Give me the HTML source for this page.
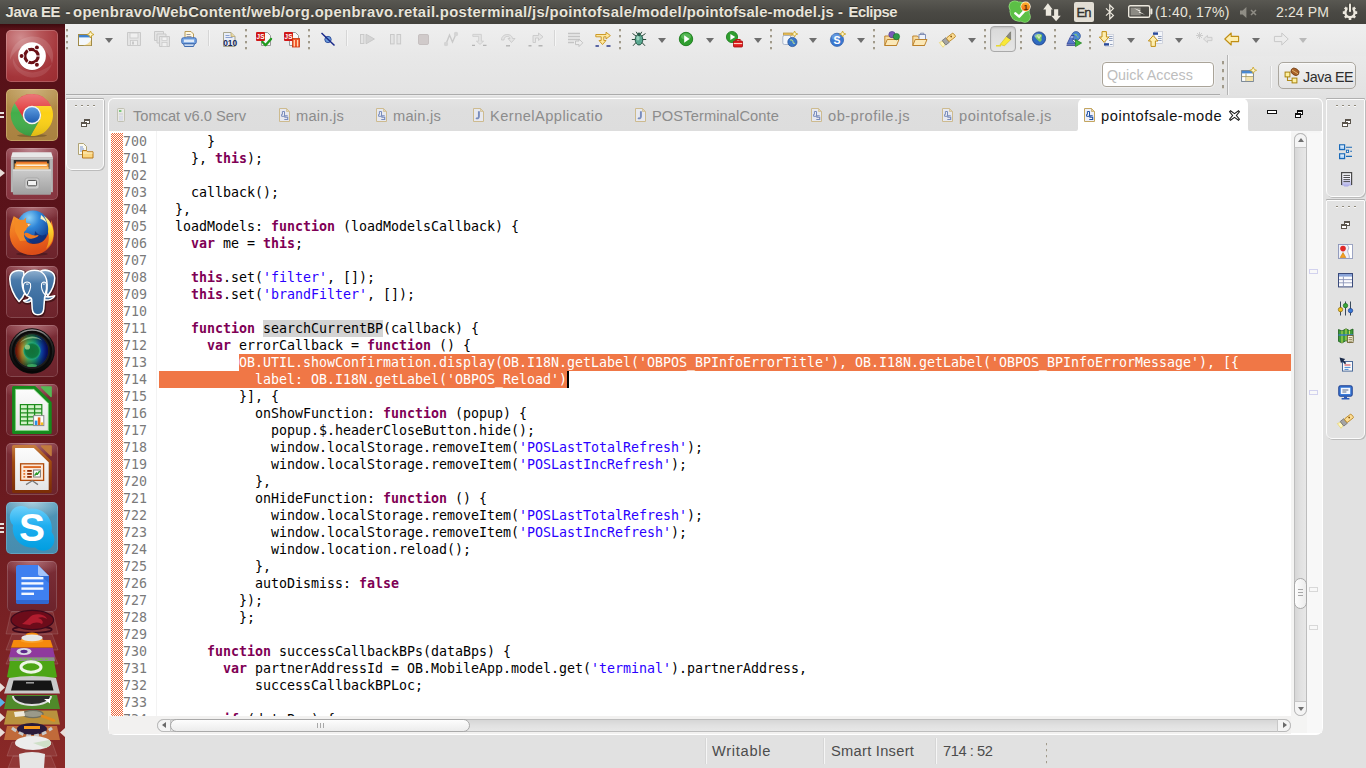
<!DOCTYPE html>
<html lang="en"><head><meta charset="utf-8"><title>Java EE - Eclipse</title>
<style>
*{box-sizing:border-box;margin:0;padding:0}
html,body{width:1366px;height:768px;overflow:hidden;background:#e1e1e1;font-family:"Liberation Sans",sans-serif}
body{position:relative}
.a{position:absolute}
svg{position:absolute;overflow:visible}
/* top panel */
#panel{position:absolute;left:0;top:0;width:1366px;height:24px;background:linear-gradient(#595852,#4a4944 50%,#43423d);color:#dfdbd2;z-index:5}
#title{position:absolute;left:0;top:3px;width:900px;height:19px;font-weight:bold;font-size:14.8px;line-height:19px;white-space:pre;color:#e8e4da;text-shadow:0 -1px 0 rgba(0,0,0,.4)}
.ind{position:absolute;top:3px;font-size:15px;line-height:19px;white-space:nowrap;color:#e8e4da}
/* launcher */
#launcher{position:absolute;left:0;top:24px;width:65px;height:744px;background:linear-gradient(rgba(40,4,6,.55),rgba(40,4,6,0) 5px),linear-gradient(#571118,#5c141b 45%,#782124 80%,#8a2927);z-index:4}
.tile{position:absolute;left:6px;width:52px;height:52px;border-radius:5px;background:linear-gradient(#8b3c45,#6b1e27);box-shadow:inset 0 0 0 1px rgba(255,255,255,.16)}
/* toolbar */
#tb{position:absolute;left:65px;top:24px;width:1301px;height:70px;background:linear-gradient(#efefef,#e8e8e8 45%,#e3e3e3)}
#tbline{position:absolute;left:66px;top:94px;width:1154px;height:1px;background:#ababab}
#tbline2{position:absolute;left:66px;top:95px;width:1154px;height:1px;background:#ececec}
.hd{position:absolute;width:2px;background:repeating-linear-gradient(transparent 0,transparent 1px,#a09a8c 1px,#a09a8c 3px,#d6d2c8 3px,#d6d2c8 4px,transparent 4px,transparent 6px)}
.sp{position:absolute;width:1px;background:#d6d6d6;box-shadow:1px 0 0 #f6f6f6}
.dd{position:absolute;width:0;height:0;border-left:4px solid transparent;border-right:4px solid transparent;border-top:5px solid #6e6e6e}
/* editor */
#edbox{position:absolute;left:108px;top:98px;width:1215px;height:637px;background:#f6f6f6;border:2px solid #fff;border-top-width:1px;border-radius:6px 6px 7px 7px}
#tabbar{position:absolute;left:109px;top:99px;width:1213px;height:32px;background:linear-gradient(#e3e3e3,#dedede 35%,#dddddd);border-radius:5px 5px 0 0}
.tab{position:absolute;top:108px;font-size:14.67px;line-height:17px;color:#8c8c8c;white-space:nowrap}
#atab{display:none}
#edwhite{position:absolute;left:109px;top:131px;width:1182px;height:585px;background:#fff;overflow:hidden}
#ruler{position:absolute;left:111px;top:133px;width:12px;height:583px;background:repeating-conic-gradient(#f0693a 0 25%,#fff 0 50%) 0 0/2px 2px}
#code{position:absolute;left:50px;top:2px;font-family:"DejaVu Sans Mono",monospace;font-size:13.3px;letter-spacing:-.0055px;line-height:17px;white-space:pre;color:#000}
#nums{position:absolute;left:14px;top:2px;font-family:"DejaVu Sans Mono",monospace;font-size:13.3px;letter-spacing:-.0055px;line-height:17px;white-space:pre;color:#7a7a7a}
.k{color:#7f0055;font-weight:bold}
.s{color:#2a00ff}
.sel{color:#fff}
.st{position:absolute;top:743px;font-size:14.67px;line-height:17px;color:#4c4c4c;white-space:nowrap}

.ntile{background:radial-gradient(ellipse 65% 30% at 50% 0,rgba(220,170,175,.55),rgba(220,170,175,0) 100%),linear-gradient(#7c2e37,#6c232b);box-shadow:inset 0 0 0 1px rgba(255,255,255,.17)}

</style></head><body>
<!-- panel.html -->
<div id="panel">
<div id="title"><span style="position:absolute;left:5.5px;top:0;letter-spacing:-0.326px">Java EE</span><span style="position:absolute;left:65.4px;top:0;letter-spacing:0.062px">-</span><span style="position:absolute;left:73.0px;top:0;letter-spacing:0.349px">openbravo/WebContent/web/org.openbravo.retail.posterminal/js/pointofsale/model</span><span style="position:absolute;left:682.5px;top:0;letter-spacing:0.167px">/pointofsale-model.js</span><span style="position:absolute;left:838.0px;top:0;letter-spacing:0.062px">-</span><span style="position:absolute;left:848.5px;top:0;letter-spacing:-0.475px">Eclipse</span></div>
<!-- skype indicator -->
<svg style="left:1008px;top:0" width="24" height="23" viewBox="1008 0 24 23">
 <defs><linearGradient id="bdg" x1="0" y1="0" x2="0" y2="1"><stop offset="0" stop-color="#ffb62e"/><stop offset="1" stop-color="#ee6a10"/></linearGradient></defs>
 <g fill="#8fdc7a"><circle cx="1019.6" cy="11.6" r="10.1"/><circle cx="1014.6" cy="6.4" r="6"/><circle cx="1024.8" cy="16.8" r="6"/></g>
 <g fill="#5cc046"><circle cx="1019.6" cy="11.6" r="9.3"/><circle cx="1014.6" cy="6.4" r="5.2"/><circle cx="1024.8" cy="16.8" r="5.2"/></g>
 <path d="M1015.4 13.4 L1019.2 16.6 L1024.4 10.8" fill="none" stroke="#fff" stroke-width="2.5" stroke-linecap="round" stroke-linejoin="round"/>
 <circle cx="1025.6" cy="6.6" r="5.1" fill="#fff4e0"/>
 <circle cx="1025.6" cy="6.6" r="4.4" fill="url(#bdg)"/>
 <text x="1025.7" y="9.6" font-family="Liberation Sans, sans-serif" font-size="8" font-weight="bold" fill="#5a2c06" text-anchor="middle">1</text>
</svg>
<!-- network -->
<svg style="left:1043px;top:3px" width="18" height="19" viewBox="0 0 18 19">
 <path d="M4.9 .3 L9.7 6.5 L8.2 6.5 L8.2 12.7 L2.8 12.7 L2.8 6.5 L.2 6.5Z" fill="#ece8de"/>
 <path d="M13.1 18.3 L8.3 12.7 L11.1 12.7 L11.1 6.2 L15.2 6.2 L15.2 12.7 L17.8 12.7Z" fill="#ece8de"/>
</svg>
<!-- En -->
<div class="a" style="left:1074px;top:2px;width:20px;height:20px;background:#e2ded5;border-radius:2px"></div>
<div class="a" style="left:1074px;top:3px;width:20px;text-align:center;font-size:13px;letter-spacing:-.7px;text-indent:-.7px;-webkit-text-stroke:.35px #33322e;line-height:19px;color:#33322e">En</div>
<!-- bluetooth -->
<svg style="left:1105px;top:4px" width="10" height="16" viewBox="0 0 10 16">
 <path d="M1 4.4 L8.4 11.4 L4.8 15 L4.8 1 L8.4 4.6 L1 11.6" fill="none" stroke="#ece8de" stroke-width="1.25" stroke-linejoin="miter"/>
</svg>
<!-- battery -->
<svg style="left:1128px;top:5px" width="25" height="13" viewBox="0 0 25 13">
 <rect x=".7" y=".7" width="21" height="11.6" rx="1.6" fill="none" stroke="#ece8de" stroke-width="1.4"/>
 <rect x="22.4" y="3.6" width="2" height="5.8" rx=".8" fill="#ece8de"/>
 <rect x="2.6" y="2.6" width="10" height="7.8" fill="#8d8b84"/>
 <path d="M6 3.2 L12.4 5.4 L11.4 6.6 L17 9.8 L10.6 7.6 L11.6 6.4Z" fill="#f4f1ea"/>
</svg>
<div class="ind" style="left:1155px;font-size:14px;letter-spacing:.2px">(1:40, 17%)</div>
<!-- volume muted -->
<svg style="left:1240px;top:7px" width="19" height="11" viewBox="0 0 19 11">
 <path d="M0 3.4 L2.6 3.4 L6.4 0 L6.4 11 L2.6 7.6 L0 7.6Z" fill="#8f8d85"/>
 <path d="M11 3 L16 8 M16 3 L11 8" stroke="#8f8d85" stroke-width="1.5" fill="none"/>
</svg>
<div class="ind" style="left:1276px;font-size:14px;letter-spacing:.12px">2:24 PM</div>
<!-- gear/power -->
<svg style="left:1341px;top:3px" width="18" height="18" viewBox="0 0 18 18">
 <g fill="none" stroke="#ece8de">
 <circle cx="9" cy="9.6" r="4.6" stroke-width="2.3"/>
 <path d="M9 2.4v3 M9 14v3 M1.8 9.6h3 M13.2 9.6h3 M3.9 4.5l2.1 2.1 M12 12.6l2.1 2.1 M14.1 4.5l-2.1 2.1 M6 12.6l-2.1 2.1" stroke-width="2.6"/>
 </g>
 <rect x="6.6" y="0" width="4.8" height="8" fill="#47463f"/>
 <rect x="8" y=".6" width="2" height="8.4" rx=".8" fill="#ece8de"/>
</svg>
</div>

<!-- launcher.html -->
<div id="launcher">
<!-- 0 ubuntu -->
<div class="tile" style="top:6px;background:radial-gradient(circle at 28% 15%,#d08c8e,#b65558 35%,#a4353a 68%,#9a2c31 100%);box-shadow:inset 0 0 0 1px rgba(255,255,255,.2)">
 <svg style="left:0;top:0" width="52" height="52" viewBox="0 0 52 52">
  <path d="M4 30 C4 14 18 4 32 7 C44 10 50 22 46 34 C44 22 34 13 22 15 C12 17 6 24 4 30Z" fill="rgba(255,255,255,.13)"/>
  <path d="M46 34 C42 46 28 51 17 45 C9 41 6 34 7 28 C10 38 20 44 30 42 C38 40 44 36 46 34Z" fill="rgba(255,255,255,.1)"/>
  <circle cx="26" cy="26.6" r="13.9" fill="rgba(60,0,0,.25)"/>
  <circle cx="26" cy="26.1" r="13.9" fill="#fff"/>
  <circle cx="25.5" cy="26.05" r="6.7" fill="none" stroke="#6a1016" stroke-width="3.2"/>
  <path d="M29.90 26.05 L34.70 26.05 M23.30 29.86 L20.90 34.02 M23.30 22.24 L20.90 18.08 " stroke="#fff" stroke-width="1.05" fill="none"/>
  <circle cx="15.6" cy="26.05" r="2.75" fill="#fff"/><circle cx="30.9" cy="17.4" r="2.75" fill="#fff"/><circle cx="30.9" cy="34.7" r="2.75" fill="#fff"/>
  <circle cx="15.6" cy="26.05" r="1.95" fill="#6a1016"/><circle cx="30.9" cy="17.4" r="1.95" fill="#6a1016"/><circle cx="30.9" cy="34.7" r="1.95" fill="#6a1016"/>
 </svg>
</div>
<!-- 1 chrome -->
<div class="tile" style="top:65px;background:radial-gradient(ellipse 70% 45% at 50% 0,#cdb27c,rgba(205,178,124,0) 100%),linear-gradient(#b48d4a,#a98140);box-shadow:inset 0 0 0 1px rgba(255,235,180,.3)">
 <svg style="left:5px;top:5px" width="42" height="43" viewBox="-21 -21 42 43">
  <defs><linearGradient id="cgl" x1="0" y1="0" x2="0" y2="1"><stop offset="0" stop-color="#fff" stop-opacity=".32"/><stop offset=".45" stop-color="#fff" stop-opacity="0"/><stop offset="1" stop-color="#000" stop-opacity=".12"/></linearGradient>
  <linearGradient id="cgb" x1="0" y1="0" x2="0" y2="1"><stop offset="0" stop-color="#5c9ce0"/><stop offset="1" stop-color="#1f5cb0"/></linearGradient></defs>
  <ellipse cx="0" cy="20.6" rx="15" ry="1.6" fill="rgba(0,0,0,.22)"/>
  <path d="M-7.9 4.55 L-17.36 -11.84 A21 21 0 0 1 18.93 -9.1 L0 -9.1 A9.1 9.1 0 0 0 -7.9 4.55Z" fill="#e23a3c"/>
  <path d="M0 -9.1 L18.93 -9.1 A21 21 0 0 1 -1.56 20.94 L7.9 4.55 A9.1 9.1 0 0 0 0 -9.1Z" fill="#fcd116"/>
  <path d="M7.9 4.55 L-1.56 20.94 A21 21 0 0 1 -17.36 -11.84 L-7.9 4.55 A9.1 9.1 0 0 0 7.9 4.55Z" fill="#42ae4a"/>
  <circle r="21" fill="url(#cgl)"/>
  <circle r="9.2" fill="#f6f6f6"/>
  <circle r="7.8" fill="url(#cgb)"/>
 </svg>
</div>
<!-- 2 files -->
<div class="tile" style="top:124px;background:radial-gradient(ellipse 60% 35% at 50% 0,#c08c94,rgba(192,140,148,0) 100%),linear-gradient(#90404a,#86343f)">
 <svg style="left:0;top:0" width="52" height="52" viewBox="0 0 52 52">
  <defs><linearGradient id="fdr" x1="0" y1="0" x2="0" y2="1"><stop offset="0" stop-color="#cbcbcb"/><stop offset="1" stop-color="#a0a0a0"/></linearGradient></defs>
  <path d="M6.5 4.3 H45.3 L46.9 9.5 H4.9Z" fill="#e8e8e8"/>
  <rect x="4.9" y="9.5" width="42" height="34.7" fill="#b4b4b4"/>
  <rect x="4.9" y="9.5" width="42" height="1.2" fill="#d2d2d2"/>
  <rect x="7.7" y="12" width="35.7" height="9.4" fill="#2c2c2c"/>
  <rect x="10" y="13.6" width="31" height="3" fill="#e8742a"/>
  <rect x="8.6" y="15.4" width="34" height="6" fill="#f6a040"/>
  <rect x="10.4" y="16.6" width="30.4" height="1.2" fill="#fff"/>
  <rect x="8.6" y="19.2" width="34" height="2.2" fill="#f8c070"/>
  <rect x="6.9" y="21.5" width="38.1" height="25.2" rx="1" fill="url(#fdr)"/>
  <rect x="6.9" y="21.5" width="38.1" height="1.3" fill="#dedede"/>
  <rect x="19" y="30" width="14.1" height="11" rx="2.2" fill="#cdcdcd" stroke="#a2a2a2" stroke-width=".8"/>
  <rect x="21.6" y="32.4" width="9" height="5.4" rx="1" fill="#f2f2f2" stroke="#4a4a4a" stroke-width="1"/>
 </svg>
</div>
<!-- 3 firefox -->
<div class="tile ntile" style="top:183px">
 <svg style="left:3px;top:2.5px" width="46" height="46" viewBox="-23 -23 46 46">
  <defs>
   <radialGradient id="ffg" cx=".38" cy=".22" r=".8"><stop offset="0" stop-color="#8fd2f6"/><stop offset=".4" stop-color="#2f86d8"/><stop offset="1" stop-color="#123a8c"/></radialGradient>
   <linearGradient id="ffo" x1="0" y1="0" x2=".3" y2="1"><stop offset="0" stop-color="#f79a2c"/><stop offset=".55" stop-color="#ee6e1e"/><stop offset="1" stop-color="#dc4e18"/></linearGradient>
   <linearGradient id="ffy" x1="0" y1="0" x2="0" y2="1"><stop offset="0" stop-color="#fff0a0"/><stop offset=".4" stop-color="#fcd42c"/><stop offset="1" stop-color="#f08a1c"/></linearGradient>
  </defs>
  <ellipse cx="0" cy="21" rx="16" ry="1.8" fill="rgba(0,0,0,.25)"/>
  <circle cx="1" cy="-6" r="16.4" fill="url(#ffg)"/>
  <path d="M3 -2 C6 2 10 4 14 1 C15 6 11 10 5 11 C1 11 -3 9 -4 6 C0 7 3 4 3 -2Z" fill="#102e78" opacity=".8"/>
  <path d="M-18.2 -16.8 C-21 -10 -23 -2 -22 4 C-21 14 -12 22 0 22 C10 22 18 16 21 8 C22.5 2 22 -6 19 -13 C19.5 -8 18 -2 15 3 C13 8 8 11 2 11 C-2 11 -5 9.5 -5.7 7.4 C-7.5 5.5 -8.5 3 -8.1 .2 L-10 -12Z" fill="url(#ffo)"/>
  <path d="M-18.2 -16.8 L-15 -11.5 C-13 -13 -10.5 -13.5 -8.5 -13 L-5.7 -15.6 C-6.3 -13 -6.3 -11 -5.5 -10 C-4 -9.8 -2.2 -9.5 -1.2 -8.7 L-3.5 -6.5 C-5 -5.5 -5.8 -4 -5.7 -3 C-7 -2.5 -8 -1 -8.1 .2 C-8.5 3 -7.5 5.5 -5.7 7.4 L-12 8 L-17 -2Z" fill="#f48a24"/>
  <path d="M-8 1 C-5 6.5 0 6.5 4.4 4.2 C6 3.5 6.5 2.5 6.5 2 C3 3 0 2.5 -3 .5 C-5 -.5 -7 -.5 -8 1Z" fill="#f07a20"/>
  <path d="M-4.6 -9 L-1.6 -8.6 L-3.6 -6.8Z" fill="#fde8c8"/>
  <path d="M12 -17 C17 -14 21 -8 21.5 -1 C22 6 19 12 14 16 C17 10 17.5 4 16 -1 C17 -6 15 -12 12 -17Z" fill="url(#ffy)"/>
  <path d="M9 -18 C12 -16 14 -13 14.5 -10 C13 -12 11 -13.5 8.5 -14Z" fill="#fff4c0"/>
 </svg>
</div>
<!-- 4 pgadmin -->
<div class="tile ntile" style="top:242px">
 <svg style="left:0;top:0" width="52" height="52" viewBox="-.9 -1.4 54 54">
  <defs><linearGradient id="pgg" x1="0" y1="0" x2="0" y2="1"><stop offset="0" stop-color="#8fb0cf"/><stop offset=".3" stop-color="#4a7aaa"/><stop offset="1" stop-color="#2f6296"/></linearGradient></defs>
  <g fill="none" stroke="rgba(20,0,0,.45)" stroke-width="3.6" stroke-linejoin="round" transform="translate(.4,.8)">
   <path d="M17.5 4.5 C12 2 3 3.5 3 12 C3 20 7.5 30 12.6 35.5 C15 33.5 17.5 30 18.5 27Z"/><path d="M35 4 C40 1.5 49.7 3.5 49.7 11 C49.7 18 46 25 42.5 29.5 C41 27 40 24 40 22Z"/>
   <path d="M28.7 3 C20 3 15.5 9 15.8 16 C16 22 18 27 21 29.5 C23 31 25.5 31 25.7 33 L26.3 43 C26.6 47 29 49.3 32.2 49.3 C35.5 49.3 38 47 38.3 43 L39.2 31 C41 28 42 24 41.8 18 C41.6 9 37 3 28.7 3Z"/>
   <path d="M39.2 30.3 C43 31 47 30.5 49.7 29.6 C48.5 33 43 34.6 39 33.6Z"/><path d="M25.3 30.5 C23 33 20 34.5 17.4 34.8 C19 36.8 23 36.8 25.6 34.4Z"/>
  </g>
  <g fill="url(#pgg)" stroke="#fff" stroke-width="1.6" stroke-linejoin="round">
   <path d="M17.5 4.5 C12 2 3 3.5 3 12 C3 20 7.5 30 12.6 35.5 C15 33.5 17.5 30 18.5 27Z"/>
   <path d="M35 4 C40 1.5 49.7 3.5 49.7 11 C49.7 18 46 25 42.5 29.5 C41 27 40 24 40 22Z"/>
   <path d="M25.3 30.5 C23 33 20 34.5 17.4 34.8 C19 36.8 23 36.8 25.6 34.4Z"/>
   <path d="M39.2 30.3 C43 31 47 30.5 49.7 29.6 C48.5 33 43 34.6 39 33.6Z"/>
   <path d="M28.7 3 C20 3 15.5 9 15.8 16 C16 22 18 27 21 29.5 C23 31 25.5 31 25.7 33 L26.3 43 C26.6 47 29 49.3 32.2 49.3 C35.5 49.3 38 47 38.3 43 L39.2 31 C41 28 42 24 41.8 18 C41.6 9 37 3 28.7 3Z"/>
  </g>
  <g fill="none" stroke="#fff" stroke-width="1.1">
   <path d="M17.5 17 C19 14.5 23 14.5 24.5 17 C25.5 21 23 27 20.5 29.5 C18 27 16.5 21 17.5 17Z"/>
   <path d="M36 17 C37.5 14.6 40 15 41 17 C41.5 21 40.5 26 39.5 28.5 C37.5 26 35.5 21 36 17Z"/>
   <path d="M20 17.4h2.6 M37.4 17.4h2" stroke-width="1"/>
  </g>
 </svg>
</div>
<!-- 5 camera -->
<div class="tile ntile" style="top:301px">
 <svg style="left:3px;top:2.5px" width="46" height="46" viewBox="-23 -23 46 46">
  <defs>
   <linearGradient id="cml" x1="0" y1="0" x2="1" y2="0"><stop offset="0" stop-color="#e8200c"/><stop offset=".2" stop-color="#c89a30"/><stop offset=".38" stop-color="#4cb866"/><stop offset=".6" stop-color="#18a07a"/><stop offset=".82" stop-color="#1048c4"/><stop offset="1" stop-color="#1014c8"/></linearGradient>
   <radialGradient id="cmd" cx=".5" cy=".5" r=".5"><stop offset=".45" stop-color="#000" stop-opacity="0"/><stop offset="1" stop-color="#000" stop-opacity=".6"/></radialGradient>
   <radialGradient id="cmp" cx=".5" cy=".5" r=".5"><stop offset="0" stop-color="#127038"/><stop offset=".75" stop-color="#0f7840"/><stop offset="1" stop-color="#22a880"/></radialGradient>
   <linearGradient id="cmr" x1="0" y1="0" x2="0" y2="1"><stop offset="0" stop-color="#9a9a9a"/><stop offset=".25" stop-color="#2a2a2a"/><stop offset="1" stop-color="#050505"/></linearGradient>
  </defs>
  <circle r="22.8" fill="#0a0a0a"/>
  <circle r="21" fill="none" stroke="url(#cmr)" stroke-width="1.6"/>
  <circle r="18" fill="#1c1c1c"/>
  <circle cx="-.3" cy="-.3" r="16.3" fill="url(#cml)"/>
  <circle cx="-.3" cy="-.3" r="16.3" fill="url(#cmd)"/>
  <path d="M-12 -8 A14.5 14.5 0 0 1 10 -10.5 A20 20 0 0 0 -12 -8Z" fill="#c8f0b0" opacity=".55"/>
  <circle cx="0" cy="0" r="8.6" fill="url(#cmp)"/>
  <circle cx="-4.6" cy="-4" r="2.6" fill="#a8d890" opacity=".8"/>
  <ellipse cx="0" cy="14.5" rx="5" ry="1.6" fill="#58e080" opacity=".55"/>
 </svg>
</div>
<!-- 6 calc -->
<div class="tile ntile" style="top:360px">
 <svg style="left:0;top:0" width="52" height="52" viewBox="0 0 52 52">
  <defs><linearGradient id="lop" x1="0" y1="0" x2="0" y2="1"><stop offset="0" stop-color="#fdfdfd"/><stop offset="1" stop-color="#e4e4e4"/></linearGradient></defs>
  <path d="M7.6 3.4 H28.4 L44.2 18.8 V48.4 H7.6Z" fill="url(#lop)" stroke="#168a1c" stroke-width="3" stroke-linejoin="round"/>
  <path d="M9.4 5.2 H27.8 L42.4 19.5 V46.6 H9.4Z" fill="none" stroke="#4cc04c" stroke-width=".9" opacity=".8"/>
  <path d="M35.4 2.9 H45.1 V12.6Z" fill="#55b855" stroke="#55b855" stroke-width="1.4" stroke-linejoin="round"/>
  <rect x="14.4" y="20.6" width="21.4" height="20.2" fill="#d2f2c8" stroke="#1c8c1c" stroke-width="1.2"/>
  <path d="M14.4 24.8h21.4 M14.4 28.8h21.4 M14.4 32.8h21.4 M14.4 36.8h21.4 M21.5 20.6v20.2 M28.6 20.6v20.2" stroke="#1c8c1c" stroke-width="1.3" fill="none"/>
  <rect x="27.6" y="31.6" width="10.2" height="10" fill="#fdfdfd" stroke="#8a8a8a" stroke-width="1"/>
  <rect x="28.8" y="36.6" width="2.6" height="4.4" fill="#2a90e8"/><rect x="31.8" y="33.4" width="2.6" height="7.6" fill="#e8681a"/><rect x="34.8" y="38.4" width="2.4" height="2.6" fill="#f4c020"/>
 </svg>
</div>
<!-- 7 impress -->
<div class="tile ntile" style="top:419px">
 <svg style="left:0;top:0" width="52" height="52" viewBox="0 0 52 52">
  <defs><linearGradient id="imb" x1="0" y1="0" x2="0" y2="1"><stop offset="0" stop-color="#c47a3c"/><stop offset=".35" stop-color="#a04a10"/><stop offset="1" stop-color="#7c2e06"/></linearGradient></defs>
  <path d="M7.6 3.4 H28.4 L44.2 18.8 V48.4 H7.6Z" fill="url(#lop)" stroke="url(#imb)" stroke-width="3" stroke-linejoin="round"/>
  <path d="M35.4 2.9 H45.1 V12.6Z" fill="#c07a3e" stroke="#c07a3e" stroke-width="1.4" stroke-linejoin="round"/>
  <rect x="14.6" y="20.8" width="23" height="16.6" fill="#fce6d6" stroke="#b04a0a" stroke-width="1.3"/>
  <rect x="17.4" y="23.2" width="17.6" height="1.7" fill="#d85a10"/>
  <g fill="#e87830"><rect x="17.4" y="27" width="1.8" height="1.8"/><rect x="17.4" y="30" width="1.8" height="1.8"/><rect x="17.4" y="33" width="1.8" height="1.8"/></g>
  <g fill="#8a2a04"><rect x="21.2" y="27" width="4.6" height="1.8"/><rect x="21.2" y="30" width="4.6" height="1.8"/><rect x="21.2" y="33" width="4.6" height="1.8"/></g>
  <rect x="27.6" y="27" width="6.8" height="7" fill="#fbfbfb" stroke="#7a7a7a" stroke-width="1"/>
  <path d="M28.6 32.6 L30.4 30 L31.6 31 L33.6 28.2" fill="none" stroke="#2a9a2a" stroke-width="1.4"/>
  <path d="M26.3 37.8 L20 41.6 M26.3 37.8 L32 41.6" stroke="#7a7a7a" stroke-width="1.3" fill="none"/>
 </svg>
</div>
<!-- 8 skype -->
<div class="tile" style="top:478px;background:radial-gradient(ellipse 65% 35% at 50% 0,rgba(200,225,235,.75),rgba(200,225,235,0) 100%),linear-gradient(#5095b6,#468cae);box-shadow:inset 0 0 0 1px rgba(200,240,255,.22)">
 <svg style="left:0;top:0" width="52" height="52" viewBox="0 0 52 52">
  <defs><linearGradient id="skg" gradientUnits="userSpaceOnUse" x1="0" y1="4" x2="0" y2="48"><stop offset="0" stop-color="#6fd0fa"/><stop offset=".45" stop-color="#1eaef0"/><stop offset="1" stop-color="#029ee0"/></linearGradient></defs>
  <g fill="url(#skg)"><circle cx="26.3" cy="26.2" r="19.6"/><circle cx="15" cy="15.2" r="11.2"/><circle cx="37.2" cy="37.6" r="11.2"/></g>
  <text x="26" y="39" font-family="Liberation Sans, sans-serif" font-size="39" font-weight="bold" fill="#fff" text-anchor="middle">S</text>
 </svg>
</div>
<!-- 9 docs -->
<div class="tile ntile" style="top:537px;height:51px;left:7px;width:50px">
 <svg style="left:8.5px;top:4px" width="33" height="39" viewBox="0 0 33 39">
  <path d="M2.5 0 H22 L33 11 V36.5 A2.5 2.5 0 0 1 30.5 39 H2.5 A2.5 2.5 0 0 1 0 36.5 V2.5 A2.5 2.5 0 0 1 2.5 0Z" fill="#3f80f0"/>
  <path d="M22 0 L33 11 H24.5 A2.5 2.5 0 0 1 22 8.5Z" fill="#a4c4fa"/>
  <path d="M24.5 11 H33 V18Z" fill="#2f66cc" opacity=".7"/>
  <path d="M0 35 H33 V36.5 A2.5 2.5 0 0 1 30.5 39 H2.5 A2.5 2.5 0 0 1 0 36.5Z" fill="#3068d0"/>
  <g fill="#f4f8ff"><rect x="5.4" y="12" width="22" height="2.4"/><rect x="5.4" y="17.2" width="22" height="2.4"/><rect x="5.4" y="22.4" width="22" height="2.4"/><rect x="5.4" y="27.6" width="12.6" height="2.4"/></g>
 </svg>
</div>
<!-- folded stack -->
<div id="stack">
<svg style="left:0;top:584px" width="65" height="160" viewBox="0 608 65 160">
 <!-- faint folded tile outlines -->
 <g fill="rgba(255,255,255,.07)" stroke="rgba(255,255,255,.13)" stroke-width="1">
  <path d="M11 612 H53 L58 634 H6Z"/><path d="M12 634 H52 L58 650 H6Z"/><path d="M12 650 H52 L58 664 H6Z"/>
  <path d="M12 742 H52 L57 756 H7Z"/><path d="M13 756 H51 L56 768 H8Z"/>
 </g>
 <!-- swirl (debian-like) -->
 <ellipse cx="32.3" cy="629.6" rx="19.5" ry="3.2" fill="none" stroke="#3c0a1c" stroke-width="1.6"/>
 <ellipse cx="32.3" cy="620" rx="21.3" ry="9.6" fill="#6c0c1a" stroke="#3c0a1c" stroke-width="1.2"/>
 <path d="M22 624 C28 620 30 616 33 615 C38 613 46 615 47 619 C44 617 40 617 38 618 C42 619 44 622 42 624 C38 622 34 622 30 625Z" fill="#b01c2e"/>
 <!-- vlc -->
 <ellipse cx="32" cy="634.6" rx="6.4" ry="2" fill="#f58a0c"/>
 <ellipse cx="32" cy="638" rx="10.7" ry="3.4" fill="#e8e8e8"/>
 <path d="M13.5 640 H50.5 L53 647.6 H11Z" fill="#f58a0c"/>
 <ellipse cx="32" cy="640.4" rx="11.5" ry="2.6" fill="#f9a028"/>
 <ellipse cx="32" cy="638.6" rx="10" ry="2.6" fill="#e4e4e4"/>
 <!-- purple -->
 <path d="M11 648 H53 L55 657.5 H9Z" fill="#8f3a9d"/>
 <ellipse cx="24" cy="651.5" rx="7.5" ry="3.4" fill="#d9d9e2"/><ellipse cx="24" cy="651.5" rx="3.6" ry="1.7" fill="#5a2a8a"/>
 <path d="M9.6 657.3 H54.4 L55 661.3 H9Z" fill="#8e8e8e"/><path d="M14 659.3 H50" stroke="#6ac83a" stroke-width="1.2" stroke-dasharray="2.4 2.8"/>
 <!-- green -->
 <path d="M10 661 H54 L57 677 Q32 686 7 677Z" fill="#4da516"/>
 <ellipse cx="31" cy="667" rx="10" ry="5.2" fill="none" stroke="#eef6e6" stroke-width="3"/>
 <!-- dark screen -->
 <path d="M9 678 Q32 674 56 678 L60 693.5 H4Z" fill="#c9c9c9"/>
 <path d="M13.5 680.5 H51 L53.5 690.5 H11Z" fill="#151515"/>
 <rect x="26" y="682" width="8" height="1.6" fill="#999"/>
 <!-- green tile w dark circle -->
 <path d="M7 695 H57 L60 709 H4Z" fill="#4f8a2a"/>
 <path d="M13 696 A19 9 0 0 0 51 696Z" fill="#2a2a2a"/>
 <path d="M13 696 A19 9 0 0 0 51 696" fill="none" stroke="#dedede" stroke-width="2"/>
 <path d="M44 699 L50 699 L50 703.5Z" fill="#fff"/>
 <!-- tan tile -->
 <path d="M7 710.5 H57 L60 724.5 H4Z" fill="#b9923e"/>
 <ellipse cx="33" cy="714" rx="10" ry="3.6" fill="#9a9a8a" stroke="#6f6f5f" stroke-width="1.4"/>
 <path d="M42 716 L54 720.5" stroke="#e58a1a" stroke-width="2.6" stroke-linecap="round"/>
 <path d="M14 712 L24 711 L25 716 L15 717Z" fill="#efe9d9"/>
 <!-- orange/brown tile with gear -->
 <path d="M7 726 H57 L60 740 H4Z" fill="#c06a3a"/>
 <ellipse cx="32" cy="729" rx="15" ry="6" fill="#2a1a3a"/>
 <path d="M12 728 Q32 744 52 728" fill="none" stroke="#c9c9c9" stroke-width="3" stroke-dasharray="5 3"/>
 <rect x="24" y="726" width="16" height="3" fill="#f59a1a"/>
 <!-- disc -->
 <ellipse cx="33" cy="743" rx="18" ry="7" fill="#ececec"/>
 <path d="M33 743 L49 740 A18 7 0 0 1 46 748Z" fill="#cfe0c8"/>
 <!-- white blob -->
 <path d="M19 754 Q32 750 45 754 L44 768 H20Z" fill="#e6e6e6"/>
 <!-- arrows -->
 <path d="M0 683 L5 687.5 L0 692Z" fill="#e8dcd8"/>
 <path d="M0 698 L5 702.5 L0 707Z" fill="#5ab4e8"/>
 <path d="M0 713 L5 717.5 L0 722Z" fill="#e8dcd8"/>
 <path d="M0 728 L5 732.5 L0 737Z" fill="#e8dcd8"/>
 <path d="M65 728 L60 732.5 L65 737Z" fill="#e8dcd8"/>
</svg></div>
<!-- pips -->
<div class="a" style="left:0;top:88px;width:4px;height:2px;background:#e8e0dc;box-shadow:0 4px 0 #e8e0dc"></div>
<div class="a" style="left:0;top:145px;width:0;height:0;border-top:4px solid transparent;border-bottom:4px solid transparent;border-left:5px solid #e8dcd8"></div>
<div class="a" style="left:0;top:499px;width:4px;height:2px;background:#e8e0dc;box-shadow:0 4px 0 #e8e0dc,0 8px 0 #e8e0dc"></div>
</div>

<!-- toolbar.html -->
<div id="tb"></div><div id="tbline"></div><div id="tbline2"></div>
<div class="hd" style="left:66px;top:28px;height:22px"></div>
<div class="hd" style="left:245px;top:28px;height:22px"></div>
<div class="hd" style="left:308px;top:28px;height:22px"></div>
<div class="hd" style="left:619px;top:28px;height:22px"></div>
<div class="hd" style="left:770px;top:28px;height:22px"></div>
<div class="hd" style="left:873px;top:28px;height:22px"></div>
<div class="hd" style="left:984px;top:28px;height:22px"></div>
<div class="hd" style="left:1019.5px;top:28px;height:22px"></div>
<div class="hd" style="left:1054px;top:28px;height:22px"></div>
<div class="hd" style="left:1089px;top:28px;height:22px"></div>
<div class="sp" style="left:208px;top:30px;height:16px"></div>
<div class="sp" style="left:346px;top:30px;height:16px"></div>
<div class="sp" style="left:554px;top:30px;height:16px"></div>
<div class="dd" style="left:105px;top:38px"></div>
<div class="dd" style="left:658px;top:38px"></div>
<div class="dd" style="left:706px;top:38px"></div>
<div class="dd" style="left:754px;top:38px"></div>
<div class="dd" style="left:809px;top:38px"></div>
<div class="dd" style="left:857px;top:38px"></div>
<div class="dd" style="left:968px;top:38px"></div>
<div class="dd" style="left:1127px;top:38px"></div>
<div class="dd" style="left:1175px;top:38px"></div>
<div class="dd" style="left:1252px;top:38px"></div>
<div class="dd" style="left:1299px;top:38px;opacity:.4"></div>
<svg style="left:78px;top:31px" width="16" height="16" viewBox="0 0 16 16"><rect x=".5" y="3.5" width="13" height="11" fill="#f4f8fc" stroke="#a08a48"/><rect x="1" y="4" width="12" height="2.4" fill="#3f82d0"/><path d="M13 9 Q10 14 5 14.2 L13 14.2Z" fill="#f3dc9a"/><path d="M12.5 0 L13.6 2.4 L16 3.5 L13.6 4.6 L12.5 7 L11.4 4.6 L9 3.5 L11.4 2.4Z" fill="#fff7c8" stroke="#c9a227" stroke-width=".9"/></svg>
<svg style="left:126px;top:31px" width="16" height="16" viewBox="0 0 16 16"><path d="M1.5 1.5 H14.5 V14.5 H1.5Z" fill="#e4e4e4" stroke="#c9c9c9"/><rect x="4" y="2" width="8" height="5" fill="#f0f0f0" stroke="#c9c9c9" stroke-width=".8"/><rect x="4.5" y="9.5" width="7" height="5" fill="#ededed" stroke="#c9c9c9" stroke-width=".8"/><rect x="6" y="10.5" width="2" height="3" fill="#c9c9c9"/></svg>
<svg style="left:154px;top:31px" width="16" height="16" viewBox="0 0 16 16"><path d="M.5 .5 H9.5 V9.5 H.5Z" fill="#e4e4e4" stroke="#c9c9c9"/><path d="M3 3 H12 V12 H3Z" fill="#e4e4e4" stroke="#c9c9c9"/><path d="M5.5 5.5 H15.5 V15.5 H5.5Z" fill="#e4e4e4" stroke="#c9c9c9"/><rect x="8" y="6" width="5" height="3.4" fill="#f2f2f2" stroke="#c9c9c9" stroke-width=".7"/><rect x="8" y="11.5" width="5" height="4" fill="#efefef" stroke="#c9c9c9" stroke-width=".7"/></svg>
<svg style="left:181px;top:31px" width="16" height="16" viewBox="0 0 16 16"><path d="M4 .5 H10 L12.5 3 V8 H4Z" fill="#fff8e0" stroke="#b99a55"/><path d="M5.5 3.5h4 M5.5 5.5h5" stroke="#8a8a9a" stroke-width=".9"/><rect x=".8" y="6.8" width="14.4" height="6" rx="1.5" fill="#7aa8e4" stroke="#3a68b4"/><rect x="3" y="8.6" width="10" height="2.6" fill="#dfeaf8"/><path d="M2.5 12.8 H13.5 L12.5 15.5 H3.5Z" fill="#c9d9f0" stroke="#2f5fa8" stroke-width=".9"/></svg>
<svg style="left:222px;top:31px" width="16" height="16" viewBox="0 0 16 16"><path d="M1.5 1.5 H9 L13 5.5 V15.5 H1.5Z" fill="#e9eef8" stroke="#a8a690"/><path d="M9 1.5 V5.5 H13" fill="#ead9a0" stroke="#b8a670" stroke-width=".8"/><path d="M3.5 4.5h4 M3.5 6.5h7" stroke="#8aa0d0" stroke-width="1.1"/><text x="8.2" y="14.6" font-family="Liberation Sans, sans-serif" font-weight="bold" font-size="8.4" fill="#14285a" text-anchor="middle">010</text></svg>
<svg style="left:256px;top:31px" width="16" height="16" viewBox="0 0 16 16"><path d="M5.5 1.5 H11.5 L14.5 4.5 V14.5 H5.5Z" fill="#f8f8f8" stroke="#9a9a9a"/><rect x="0" y="1" width="9" height="9" rx="1" fill="#d01818"/><text x="4.5" y="8" font-family="Liberation Sans, sans-serif" font-weight="bold" font-size="6.4" fill="#fff" text-anchor="middle">JS</text><path d="M6.5 11 L9.5 14.2 L15 8" fill="none" stroke="#1f9a1f" stroke-width="2.4" stroke-linecap="round" stroke-linejoin="round"/></svg>
<svg style="left:284px;top:31px" width="16" height="16" viewBox="0 0 16 16"><path d="M5.5 1.5 H11.5 L14.5 4.5 V14.5 H5.5Z" fill="#f8f8f8" stroke="#9a9a9a"/><rect x="0" y="1" width="9" height="9" rx="1" fill="#d01818"/><text x="4.5" y="8" font-family="Liberation Sans, sans-serif" font-weight="bold" font-size="6.4" fill="#fff" text-anchor="middle">JS</text><rect x="8.5" y="7.5" width="7" height="8.5" fill="#f0562a" stroke="#c8320a" stroke-width=".8"/><path d="M10.3 9 V15.5 M13.6 9 V15.5" stroke="#ffd8b0" stroke-width="1.3"/></svg>
<svg style="left:320px;top:31px" width="16" height="16" viewBox="0 0 16 16"><circle cx="8" cy="8.5" r="3.2" fill="#6a9ad8" stroke="#2a4a9a" stroke-width=".9"/><path d="M1.5 2 L14.5 14.5" stroke="#1a2a8a" stroke-width="1.5"/></svg>
<svg style="left:360px;top:31px" width="16" height="16" viewBox="0 0 16 16"><rect x=".5" y="3.5" width="3.4" height="9" fill="#e4e4e4" stroke="#c9c9c9"/><path d="M6 3.2 L14.4 8 L6 12.8Z" fill="#d4d4d4" stroke="#c9c9c9"/></svg>
<svg style="left:388px;top:31px" width="16" height="16" viewBox="0 0 16 16"><rect x="2.5" y="3.5" width="3.6" height="9.4" fill="#e4e4e4" stroke="#c9c9c9"/><rect x="9" y="3.5" width="3.6" height="9.4" fill="#e4e4e4" stroke="#c9c9c9"/></svg>
<svg style="left:416px;top:31px" width="16" height="16" viewBox="0 0 16 16"><rect x="2.5" y="3.5" width="10" height="10" rx="1.4" fill="#d0caca" stroke="#c6c0c0"/></svg>
<svg style="left:443px;top:31px" width="16" height="16" viewBox="0 0 16 16"><path d="M3 13 L6.5 4 L9.5 11 L13 3" fill="none" stroke="#c9c9c9" stroke-width="1.4"/><circle cx="3" cy="13" r="2.2" fill="#d4d4d4"/><circle cx="13" cy="3" r="2.2" fill="#d4d4d4"/></svg>
<svg style="left:471px;top:31px" width="16" height="16" viewBox="0 0 16 16"><path d="M2 3.5 H8.5 V9.5 H6 L10 13.5 L14 9.5 H11.5 V1 H2Z" fill="#e4e4e4" stroke="#c9c9c9" stroke-width=".9" transform="translate(0,2.6) scale(.9,.8)"/><path d="M1 14.4h3 M12 14.4h3.5" stroke="#b4b4b4" stroke-width="1.4"/></svg>
<svg style="left:500px;top:31px" width="16" height="16" viewBox="0 0 16 16"><path d="M1.5 9 C1.5 2 12 2 12.5 7.5 H15 L11.5 11.5 L8 7.5 H10 C9.5 4.5 4 4.5 4 9Z" fill="#e4e4e4" stroke="#c9c9c9" stroke-width=".9"/><path d="M6 14.8h4" stroke="#b4b4b4" stroke-width="1.4"/></svg>
<svg style="left:528px;top:31px" width="16" height="16" viewBox="0 0 16 16"><path d="M5 13.5 V6.5 H10.5 V4 L15 7.8 L10.5 11.5 V9 H7.5 V13.5Z" fill="#e4e4e4" stroke="#c9c9c9" stroke-width=".9" transform="translate(0,-2)"/><path d="M0.5 14.8h3 M10.5 14.8h4" stroke="#b4b4b4" stroke-width="1.4"/></svg>
<svg style="left:567px;top:31px" width="16" height="16" viewBox="0 0 16 16"><path d="M1 2.5h12 M1 5.5h12 M1 8.5h12 M1 11.5h6" stroke="#c4c4c4" stroke-width="1.7"/><path d="M8.5 10 H12 V8 L15.8 11.8 L12 15.6 V13.6 H8.5Z" fill="#ececec" stroke="#c0c0c0" stroke-width=".9"/></svg>
<svg style="left:595px;top:31px" width="16" height="16" viewBox="0 0 16 16"><path d="M.8 3.5 H11 V1.2 L15.4 4.6 L11 8 V5.8 H8.8 V9.5 H11 L7.5 13.6 L4 9.5 H6.2 V5.8 H.8Z" fill="#fde8a0" stroke="#c8921a" stroke-width=".9"/><path d="M.5 15h3.4 M11.5 15h4" stroke="#2a3a8a" stroke-width="1.5"/></svg>
<svg style="left:631px;top:31px" width="16" height="16" viewBox="0 0 16 16"><g stroke="#2a4a3a" stroke-width="1" fill="none"><path d="M5 5 L1.5 2.5 M11 5 L14.5 2.5 M4.5 8.5 H.8 M11.5 8.5 H15.2 M5 11.5 L2 14.8 M11 11.5 L14 14.8 M6.5 3 L5.2 .8 M9.5 3 L10.8 .8"/></g><ellipse cx="8" cy="8.6" rx="3.8" ry="5.4" fill="#5aa890" stroke="#1a4a3a" stroke-width=".9"/><ellipse cx="7" cy="7" rx="1.6" ry="2.6" fill="#a8dcc8" opacity=".8"/><circle cx="8" cy="3.4" r="1.8" fill="#2a5a4a"/></svg>
<svg style="left:678px;top:31px" width="16" height="16" viewBox="0 0 16 16"><circle cx="8" cy="8" r="6.7" fill="#2f9e2f" stroke="#1a7a1a" stroke-width=".9"/><ellipse cx="8" cy="5.4" rx="5" ry="3.2" fill="#7fd27f" opacity=".5"/><path d="M6.2 4.2 L11.6 8 L6.2 11.8Z" fill="#fff"/></svg>
<svg style="left:726px;top:31px" width="17" height="17" viewBox="0 0 17 17"><circle cx="6" cy="6" r="5.6" fill="#2f9e2f" stroke="#1a7a1a" stroke-width=".8"/><path d="M4.4 3 L9.2 6 L4.4 9Z" fill="#fff"/><rect x="7.5" y="10" width="9" height="6" rx=".8" fill="#e02020" stroke="#a00808" stroke-width=".8"/><path d="M10 10 V8.6 H14 V10" fill="none" stroke="#c01010" stroke-width="1.1"/><rect x="7.8" y="12" width="8.4" height="1.1" fill="#ffd0c0"/></svg>
<svg style="left:782px;top:31px" width="16" height="16" viewBox="0 0 16 16"><rect x="1.5" y="2" width="9" height="2.2" fill="#e8c060" stroke="#b89030" stroke-width=".7"/><rect x=".8" y="4.5" width="8" height="9" rx="1.6" fill="#f2f6fb" stroke="#9aa8c0" stroke-width=".8"/><circle cx="10.4" cy="11" r="4.6" fill="#3a78c8" stroke="#1f4a90" stroke-width=".7"/><path d="M8 9 C9.5 8 11.5 9.4 11 11 C10.6 12.6 12.6 13 13 12" fill="#7ec060" stroke="#e8f0c0" stroke-width=".6"/><path d="M12.6 0 L13.5 2.1 L15.8 3 L13.5 3.9 L12.6 6 L11.7 3.9 L9.4 3 L11.7 2.1Z" fill="#fff7c8" stroke="#c9a227" stroke-width=".8"/></svg>
<svg style="left:830px;top:31px" width="16" height="16" viewBox="0 0 16 16"><circle cx="7" cy="8.8" r="6.6" fill="#3a78d0" stroke="#2a5aa8" stroke-width=".7"/><ellipse cx="6" cy="6" rx="4.4" ry="3" fill="#8ab8f0" opacity=".5"/><text x="7" y="12.6" font-family="Liberation Sans, sans-serif" font-weight="bold" font-size="10.5" fill="#fff" text-anchor="middle">S</text><path d="M12.6 0 L13.5 2.1 L15.8 3 L13.5 3.9 L12.6 6 L11.7 3.9 L9.4 3 L11.7 2.1Z" fill="#fff7c8" stroke="#c9a227" stroke-width=".8"/></svg>
<svg style="left:884px;top:31px" width="17" height="16" viewBox="0 0 17 16"><path d="M.8 14.5 V5 H5.5 L6.8 6.5 H12.5 V14.5Z" fill="#f8dca0" stroke="#b87a20" stroke-width=".9"/><path d="M.8 14.5 L3.2 8.5 H15 L12.5 14.5Z" fill="#fbe8b8" stroke="#b87a20" stroke-width=".9"/><circle cx="8" cy="3.6" r="3.2" fill="#7a5ab8" stroke="#4a3a88" stroke-width=".6"/><circle cx="12.4" cy="5.6" r="3.2" fill="#2f9a4a" stroke="#1a6a2a" stroke-width=".6"/></svg>
<svg style="left:912px;top:31px" width="16" height="16" viewBox="0 0 16 16"><path d="M.8 14.5 V5 H5.5 L6.8 6.5 H12.5 V14.5Z" fill="#f8dca0" stroke="#b87a20" stroke-width=".9"/><rect x="7" y="3.6" width="6.4" height="5" fill="#eef2fa" stroke="#6a7aa8" stroke-width=".8"/><path d="M8.6 3.4 V2.2 H11.8 V3.4" fill="none" stroke="#6a7aa8" stroke-width=".8"/><path d="M.8 14.5 L3.2 8.5 H15 L12.5 14.5Z" fill="#fbe8b8" stroke="#b87a20" stroke-width=".9"/></svg>
<svg style="left:940px;top:31px" width="16" height="16" viewBox="0 0 16 16"><g transform="rotate(-38 8 8)"><path d="M-1 5.5 L2.5 6.5 V10.5 L-1 11.5Z" fill="#fff8c0" stroke="#e8d060" stroke-width=".6"/><rect x="2.5" y="5.6" width="4.6" height="5.8" fill="#a4a4a4" stroke="#6a6a6a" stroke-width=".7"/><rect x="7.1" y="6.2" width="8.6" height="4.6" rx="1" fill="#fbdc94" stroke="#b8821c" stroke-width=".8"/><circle cx="12" cy="8" r=".9" fill="#8a5a10"/></g></svg>
<div class="a" style="left:990px;top:26px;width:26px;height:26px;border-radius:4px;border:1px solid #a9a9a9;background:linear-gradient(#d9d9d9,#e6e6e6);box-shadow:inset 0 1px 2px rgba(0,0,0,.12)"></div>
<svg style="left:996px;top:31px" width="16" height="16" viewBox="0 0 16 16"><path d="M0 14.8 H5" stroke="#e8d820" stroke-width="1.4"/><path d="M4 13.6 L10.5 5.5 L14.8 8.5 L8.5 14.8Z" fill="#f8e83a" stroke="#d8c010" stroke-width=".6"/><path d="M10.5 5.5 L14.6 .8 V8.4Z" fill="#8a8a80" stroke="#6a6a60" stroke-width=".6"/></svg>
<svg style="left:1032px;top:31px" width="16" height="16" viewBox="0 0 16 16"><circle cx="7" cy="7.5" r="6.6" fill="#2f6ac0" stroke="#1a3a80" stroke-width=".8"/><path d="M3 5 C4.5 2.6 8 2.4 9.5 3.6 C11 5 9 6.5 9.6 8 C10.4 9.6 8 12 6.6 10 C5.6 8.4 3.4 8 3 5Z" fill="#7ac860"/><path d="M5.5 4.5 L7 7.6 L8.6 4.4" fill="none" stroke="#e8f4c0" stroke-width=".8"/><ellipse cx="5.5" cy="4.6" rx="3.4" ry="2.2" fill="#fff" opacity=".3"/></svg>
<svg style="left:1066px;top:31px" width="16" height="16" viewBox="0 0 16 16"><circle cx="10" cy="5" r="4.4" fill="#4a88d0" stroke="#2a4a90" stroke-width=".7"/><path d="M8 3.6 C9.5 2.4 11.6 3.4 11 5 C10.6 6.4 12.2 7 12.8 6" fill="#8ad070"/><path d="M1 13 L5 4.5 H8 L6.5 9.5 L10 13Z" fill="#5a7ac8" stroke="#2a3a90" stroke-width=".7"/><path d="M4.5 6 H7.5" stroke="#e0e8ff" stroke-width=".9"/><path d="M.5 14.2 H9" stroke="#2a3a90" stroke-width="1.2"/><path d="M9.5 8.6 L15.6 12 L9.5 15.6Z" fill="#3fb83f" stroke="#1a7a1a" stroke-width=".7"/></svg>
<svg style="left:1099px;top:31px" width="16" height="16" viewBox="0 0 16 16"><rect x="6.5" y="3.5" width="8" height="12" fill="#f4f6fa" stroke="#c4c8d4" stroke-width=".7"/><path d="M10 5.5h3.6 M10 7.5h3.6 M10 9.5h3.6 M11 13.5h2.6" stroke="#8a9ab8" stroke-width=".9"/><rect x="5" y="12.2" width="5" height="2.4" fill="#2a4a9a"/><path d="M3 .6 H7.4 V6 H10 L5.2 11.4 L.4 6 H3Z" fill="#fdeeb0" stroke="#c08e14" stroke-width="1"/></svg>
<svg style="left:1148px;top:31px" width="16" height="16" viewBox="0 0 16 16"><rect x="6.5" y=".5" width="8" height="12" fill="#f4f6fa" stroke="#c4c8d4" stroke-width=".7"/><path d="M10 5.5h3.6 M10 7.5h3.6 M10 9.5h3.6" stroke="#8a9ab8" stroke-width=".9"/><rect x="5" y="1.4" width="5" height="2.4" fill="#2a4a9a"/><path d="M3 15.4 H7.4 V10 H10 L5.2 4.6 L.4 10 H3Z" fill="#fdeeb0" stroke="#c08e14" stroke-width="1"/></svg>
<svg style="left:1196px;top:31px" width="17" height="16" viewBox="0 0 17 16"><path d="M7.5 8 L11.5 4.4 V6.4 H16 V9.6 H11.5 V11.6Z" fill="#e4e4e4" stroke="#c9c9c9" stroke-width=".9"/><path d="M3.5 1 V8 M0 4.5 H7 M1 2 L6 7 M6 2 L1 7" stroke="#c9c9c9" stroke-width=".9"/></svg>
<svg style="left:1224px;top:31px" width="16" height="16" viewBox="0 0 16 16"><path d="M.8 8 L7.2 2 V5.4 H14.6 V10.6 H7.2 V14Z" fill="#fdeeb0" stroke="#c08e14" stroke-width="1.1" stroke-linejoin="round"/></svg>
<svg style="left:1273px;top:31px" width="16" height="16" viewBox="0 0 16 16"><path d="M15.2 8 L8.8 2 V5.4 H1.4 V10.6 H8.8 V14Z" fill="#ececec" stroke="#c9c9c9" stroke-width="1" stroke-linejoin="round"/></svg>
<div class="a" style="left:1102px;top:62px;width:112px;height:25px;border:1px solid #aaa499;border-radius:4px;background:#fff;box-shadow:0 0 0 1px #efefef"></div>
<div class="a" id="qa" style="left:1107px;top:66px;font-size:14.3px;line-height:19px;color:#bdbdbd;white-space:nowrap">Quick Access</div>
<div class="a" style="left:1222px;top:60px;width:2px;height:29px;background:repeating-linear-gradient(transparent 0,transparent 1px,#a09a8c 1px,#a09a8c 4px,#d6d2c8 4px,#d6d2c8 5px,transparent 5px,transparent 8px)"></div>
<div class="a" style="left:1227px;top:55px;width:1px;height:40px;background:#b4b4b4;box-shadow:1px 0 0 #f4f4f4"></div>
<div class="a" style="left:1229px;top:56px;width:137px;height:40px;background:linear-gradient(#e9e9e9,#e2e2e2)"></div>
<svg style="left:1241px;top:67px" width="16" height="16" viewBox="0 0 16 16"><rect x=".6" y="3.6" width="11.8" height="10.8" fill="#fdfdfd" stroke="#6a7a8a" stroke-width=".9"/><rect x="1" y="4" width="11" height="2.4" fill="#4a88d0"/><path d="M1 9.6 H12.4 M5 6.4 V14.4" stroke="#a89a60" stroke-width=".9"/><rect x="5.5" y="10" width="6.6" height="4" fill="#f3e2a8"/><path d="M12.2 0 L13.2 2.3 L15.6 3.3 L13.2 4.3 L12.2 6.6 L11.2 4.3 L8.8 3.3 L11.2 2.3Z" fill="#fff7c8" stroke="#c9a227" stroke-width=".8"/></svg>
<div class="sp" style="left:1270px;top:66px;height:22px"></div>
<div class="a" style="left:1278px;top:62px;width:78px;height:27px;border:1px solid #aaa69e;border-radius:5px;background:linear-gradient(#f3f3f3,#e3e3e3);box-shadow:inset 0 1px 0 #fafafa"></div>
<svg style="left:1284px;top:67px" width="16" height="17" viewBox="0 0 16 17"><path d="M3.5 9 V13.5 H8.5" fill="none" stroke="#b08a1a" stroke-width="1.1"/><rect x="1.1" y="5.1" width="4.8" height="4.8" fill="#fdf0a0" stroke="#a8820e" stroke-width="1"/><rect x="8.1" y="11.1" width="4.8" height="4.8" fill="#fdf0a0" stroke="#a8820e" stroke-width="1"/><ellipse cx="11" cy="4.8" rx="4.3" ry="3.3" fill="#a8622a" stroke="#6a3a12" stroke-width=".7" transform="rotate(35 11 4.8)"/><path d="M8 3 L14 6.8" stroke="#f0c878" stroke-width=".8" fill="none"/></svg>
<div class="a" id="jee" style="left:1303px;top:68px;font-size:14.3px;letter-spacing:-.45px;line-height:19px;color:#2e2e2e;white-space:nowrap">Java EE</div>

<!-- editor.html -->
<div id="edbox"></div>
<div id="tabbar"></div>
<div id="edwhite">
  <div class="a" style="left:47px;top:0;width:1px;height:585px;background:#f3f3f3"></div>
  <div class="a" style="left:130px;top:223px;width:1052px;height:17px;background:#f07746"></div>
  <div class="a" style="left:50px;top:240px;width:408px;height:17px;background:#f07746"></div>
  <div class="a" style="left:154px;top:189px;width:120px;height:17px;background:#d4d4d4"></div>
  <div class="a" style="left:458px;top:240px;width:2px;height:17px;background:#000"></div>
<div id="nums">700
701
702
703
704
705
706
707
708
709
710
711
712
713
714
715
716
717
718
719
720
721
722
723
724
725
726
727
728
729
730
731
732
733
734</div>
<div id="code">      }
    }, <span class="k">this</span>);

    callback();
  },
  loadModels: <span class="k">function</span> (loadModelsCallback) {
    <span class="k">var</span> me = <span class="k">this</span>;

    <span class="k">this</span>.set(<span class="s">'filter'</span>, []);
    <span class="k">this</span>.set(<span class="s">'brandFilter'</span>, []);

    <span class="k">function</span> searchCurrentBP(callback) {
      <span class="k">var</span> errorCallback = <span class="k">function</span> () {
<span class="sel">          OB.UTIL.showConfirmation.display(OB.I18N.getLabel('OBPOS_BPInfoErrorTitle'), OB.I18N.getLabel('OBPOS_BPInfoErrorMessage'), [{</span>
<span class="sel">            label: OB.I18N.getLabel('OBPOS_Reload')</span>
          }], {
            onShowFunction: <span class="k">function</span> (popup) {
              popup.$.headerCloseButton.hide();
              window.localStorage.removeItem(<span class="s">'POSLastTotalRefresh'</span>);
              window.localStorage.removeItem(<span class="s">'POSLastIncRefresh'</span>);
            },
            onHideFunction: <span class="k">function</span> () {
              window.localStorage.removeItem(<span class="s">'POSLastTotalRefresh'</span>);
              window.localStorage.removeItem(<span class="s">'POSLastIncRefresh'</span>);
              window.location.reload();
            },
            autoDismiss: <span class="k">false</span>
          });
          };

      <span class="k">function</span> successCallbackBPs(dataBps) {
        <span class="k">var</span> partnerAddressId = OB.MobileApp.model.get(<span class="s">'terminal'</span>).partnerAddress,
            successCallbackBPLoc;

        <span class="k">if</span> (dataBps) {</div>

</div>
<div id="ruler"></div>
<!-- vertical scrollbar -->
<div class="a" style="left:1291px;top:133px;width:16px;height:600px;background:#f4f4f3"></div>
<div class="a" style="left:1294px;top:133px;width:13px;height:583px;border-radius:7px;background:linear-gradient(90deg,#d6d6d6,#e1e1e1 50%,#e7e7e7);border:1px solid #bdbdbd"></div>
<div class="a" style="left:1294px;top:133px;width:13px;height:15px;border-radius:7px 7px 0 0;background:#f4f4f4;border:1px solid #b9b9b9;border-bottom-color:#c8c8c8"></div>
<div class="a" style="left:1294px;top:701px;width:13px;height:15px;border-radius:0 0 7px 7px;background:#f4f4f4;border:1px solid #b9b9b9;border-top-color:#c8c8c8"></div>
<div class="a" style="left:1297.5px;top:138px;width:0;height:0;border-left:3px solid transparent;border-right:3px solid transparent;border-bottom:4px solid #707070"></div>
<div class="a" style="left:1297.5px;top:707px;width:0;height:0;border-left:3px solid transparent;border-right:3px solid transparent;border-top:4px solid #707070"></div>
<div class="a" style="left:1294px;top:578px;width:13px;height:31px;border-radius:7px;background:linear-gradient(90deg,#fdfdfd,#ececec);border:1px solid #a9a9a9"></div>
<div class="a" style="left:1298px;top:589px;width:5px;height:1px;background:#a8a8a8;box-shadow:0 3px 0 #a8a8a8,0 6px 0 #a8a8a8"></div>
<!-- overview ruler -->
<div class="a" style="left:1307px;top:133px;width:15px;height:600px;background:#f8f8f8"></div>
<div class="a" style="left:1309px;top:269px;width:9px;height:5px;border:1px solid #d2d2ee"></div>
<div class="a" style="left:1309px;top:390px;width:9px;height:5px;border:1px solid #d2d2ee"></div>
<div class="a" style="left:1309px;top:587px;width:9px;height:5px;border:1px solid #d8d8d8"></div>
<div class="a" style="left:1309px;top:625px;width:9px;height:5px;border:1px solid #d8d8d8"></div>
<!-- horizontal scrollbar -->
<div class="a" style="left:109px;top:716px;width:1182px;height:18px;background:#f2f1f0"></div>
<div class="a" style="left:157px;top:719px;width:1134px;height:13px;border-radius:7px;background:linear-gradient(#d6d6d6,#e1e1e1 50%,#e7e7e7);border:1px solid #bdbdbd"></div>
<div class="a" style="left:157px;top:719px;width:14px;height:13px;border-radius:7px 0 0 7px;background:#f4f4f4;border:1px solid #b9b9b9;border-right-color:#c8c8c8"></div>
<div class="a" style="left:1277px;top:719px;width:14px;height:13px;border-radius:0 7px 7px 0;background:#f4f4f4;border:1px solid #b9b9b9;border-left-color:#c8c8c8"></div>
<div class="a" style="left:162px;top:722px;width:0;height:0;border-top:3.5px solid transparent;border-bottom:3.5px solid transparent;border-right:4px solid #6a6a6a"></div>
<div class="a" style="left:1283px;top:722px;width:0;height:0;border-top:3.5px solid transparent;border-bottom:3.5px solid transparent;border-left:4px solid #6a6a6a"></div>
<div class="a" style="left:170px;top:719px;width:300px;height:13px;border-radius:7px;background:linear-gradient(#fdfdfd,#ececec);border:1px solid #a9a9a9"></div>
<div class="a" style="left:317px;top:723px;width:1px;height:5px;background:#a8a8a8;box-shadow:3px 0 0 #a8a8a8,6px 0 0 #a8a8a8"></div>

<!-- tabs.html -->
<svg style="left:117px;top:108px;opacity:.62" width="9" height="14" viewBox="0 0 9 14"><rect x=".5" y=".5" width="7" height="13" rx="1" fill="#f2f2ea" stroke="#a8a890" stroke-width=".9"/><rect x="2" y="2" width="2.4" height="2" fill="#3ab83a"/><rect x="2" y="5.4" width="4" height="1.2" fill="#c8c8d8"/><rect x="2" y="7.6" width="4" height="5" fill="#d8dcec"/></svg>
<div class="tab" style="left:133px;letter-spacing:-0.014px">Tomcat v6.0 Serv</div>
<svg style="left:279px;top:108px;opacity:.62" width="11" height="14" viewBox="0 0 11 14"><path d="M.5 .5 H7.5 L10.5 3.5 V13.5 H.5Z" fill="#eef0fa" stroke="#c4a660" stroke-width="1"/><path d="M7.5 .5 V3.5 H10.5Z" fill="#e8d49a" stroke="#c4a660" stroke-width=".7"/><path d="M3.4 3.5 H5.5 V8.3 H2.6 V6.4 H3.4Z" fill="#f4f6fc" stroke="#3a5aa8" stroke-width="1"/><path d="M8.7 7.7 H5.9 V9.3 H8.7 V11.5 H5.3" fill="none" stroke="#3a5aa8" stroke-width="1.1"/></svg>
<div class="tab" style="left:296px;letter-spacing:0.223px">main.js</div>
<svg style="left:376px;top:108px;opacity:.62" width="11" height="14" viewBox="0 0 11 14"><path d="M.5 .5 H7.5 L10.5 3.5 V13.5 H.5Z" fill="#eef0fa" stroke="#c4a660" stroke-width="1"/><path d="M7.5 .5 V3.5 H10.5Z" fill="#e8d49a" stroke="#c4a660" stroke-width=".7"/><path d="M3.4 3.5 H5.5 V8.3 H2.6 V6.4 H3.4Z" fill="#f4f6fc" stroke="#3a5aa8" stroke-width="1"/><path d="M8.7 7.7 H5.9 V9.3 H8.7 V11.5 H5.3" fill="none" stroke="#3a5aa8" stroke-width="1.1"/></svg>
<div class="tab" style="left:393px;letter-spacing:0.223px">main.js</div>
<svg style="left:473px;top:108px;opacity:.62" width="11" height="14" viewBox="0 0 11 14"><path d="M.5 .5 H7.5 L10.5 3.5 V13.5 H.5Z" fill="#eef0fa" stroke="#c4a660" stroke-width="1"/><path d="M7.5 .5 V3.5 H10.5Z" fill="#e8d49a" stroke="#c4a660" stroke-width=".7"/><path d="M5.9 3.2 V8.6 C5.9 10.4 4.2 10.8 3 10" fill="none" stroke="#3a5aa8" stroke-width="1.9"/></svg>
<div class="tab" style="left:490px;letter-spacing:0.442px">KernelApplicatio</div>
<svg style="left:635px;top:108px;opacity:.62" width="11" height="14" viewBox="0 0 11 14"><path d="M.5 .5 H7.5 L10.5 3.5 V13.5 H.5Z" fill="#eef0fa" stroke="#c4a660" stroke-width="1"/><path d="M7.5 .5 V3.5 H10.5Z" fill="#e8d49a" stroke="#c4a660" stroke-width=".7"/><path d="M5.9 3.2 V8.6 C5.9 10.4 4.2 10.8 3 10" fill="none" stroke="#3a5aa8" stroke-width="1.9"/></svg>
<div class="tab" style="left:652px;letter-spacing:0.097px">POSTerminalConte</div>
<svg style="left:811px;top:108px;opacity:.62" width="11" height="14" viewBox="0 0 11 14"><path d="M.5 .5 H7.5 L10.5 3.5 V13.5 H.5Z" fill="#eef0fa" stroke="#c4a660" stroke-width="1"/><path d="M7.5 .5 V3.5 H10.5Z" fill="#e8d49a" stroke="#c4a660" stroke-width=".7"/><path d="M3.4 3.5 H5.5 V8.3 H2.6 V6.4 H3.4Z" fill="#f4f6fc" stroke="#3a5aa8" stroke-width="1"/><path d="M8.7 7.7 H5.9 V9.3 H8.7 V11.5 H5.3" fill="none" stroke="#3a5aa8" stroke-width="1.1"/></svg>
<div class="tab" style="left:828px;letter-spacing:0.479px">ob-profile.js</div>
<svg style="left:942px;top:108px;opacity:.62" width="11" height="14" viewBox="0 0 11 14"><path d="M.5 .5 H7.5 L10.5 3.5 V13.5 H.5Z" fill="#eef0fa" stroke="#c4a660" stroke-width="1"/><path d="M7.5 .5 V3.5 H10.5Z" fill="#e8d49a" stroke="#c4a660" stroke-width=".7"/><path d="M3.4 3.5 H5.5 V8.3 H2.6 V6.4 H3.4Z" fill="#f4f6fc" stroke="#3a5aa8" stroke-width="1"/><path d="M8.7 7.7 H5.9 V9.3 H8.7 V11.5 H5.3" fill="none" stroke="#3a5aa8" stroke-width="1.1"/></svg>
<div class="tab" style="left:959px;letter-spacing:0.531px">pointofsale.js</div>
<div id="atab"></div>
<svg style="left:1076px;top:98px" width="174" height="33" viewBox="0 0 174 33"><path d="M0 33 C1.4 33 2 32 2 30 V7 C2 3 4 0.5 8 0.5 H166 C170 0.5 172 3 172 7 V30 C172 32 172.6 33 174 33Z" fill="#fff"/></svg>
<svg style="left:1084px;top:108px" width="11" height="14" viewBox="0 0 11 14"><path d="M.5 .5 H7.5 L10.5 3.5 V13.5 H.5Z" fill="#eef0fa" stroke="#c4a660" stroke-width="1"/><path d="M7.5 .5 V3.5 H10.5Z" fill="#e8d49a" stroke="#c4a660" stroke-width=".7"/><path d="M3.4 3.5 H5.5 V8.3 H2.6 V6.4 H3.4Z" fill="#f4f6fc" stroke="#1f4f9f" stroke-width="1"/><path d="M8.7 7.7 H5.9 V9.3 H8.7 V11.5 H5.3" fill="none" stroke="#1f4f9f" stroke-width="1.1"/></svg>
<div class="tab" style="left:1101px;color:#111;letter-spacing:.54px">pointofsale-mode</div>
<svg style="left:1229px;top:110px" width="11" height="11" viewBox="0 0 11 11"><path d="M1.5 .8 L5.5 3.6 L9.5 .8 L10.4 1.8 L7.4 5.5 L10.4 9.2 L9.5 10.2 L5.5 7.4 L1.5 10.2 L.6 9.2 L3.6 5.5 L.6 1.8Z" fill="#fff" stroke="#1a1a1a" stroke-width="1.1"/></svg>
<div class="a" style="left:1267px;top:110px;width:10px;height:4px;border:1px solid #111;background:#fff"></div>
<div class="a" style="left:1297px;top:110px;width:6px;height:5px;border:1px solid #111;border-top-width:2px;background:#fff"></div>
<div class="a" style="left:1295px;top:113px;width:6px;height:5px;border:1px solid #111;border-top-width:2px;background:#fff"></div>

<!-- side.html -->
<div class="a" style="left:66px;top:99px;width:38px;height:71px;border-radius:1px 1px 6px 6px;background:#e2e2e2;border:1px solid #fcfcfc;box-shadow:1px 1px 0 #bcbcbc,0 -1px 0 #b0b0b0"></div>
<div class="a" style="left:75px;top:105px;width:20px;height:2px;background:linear-gradient(#8e887a 0,#8e887a 1px,#fafafa 1px,#fafafa 2px);-webkit-mask:repeating-linear-gradient(90deg,#000 0,#000 2px,transparent 2px,transparent 6px);mask:repeating-linear-gradient(90deg,#000 0,#000 2px,transparent 2px,transparent 6px)"></div>
<div class="a" style="left:84px;top:119px;width:6px;height:5px;border:1px solid #5a544c;border-top-width:2px;background:#fff"></div>
<div class="a" style="left:81px;top:122px;width:6px;height:5px;border:1px solid #5a544c;border-top-width:2px;background:#fff"></div>
<svg style="left:78px;top:143px" width="16" height="16" viewBox="0 0 16 16"><path d="M.5 .5 H5.5 L8.5 3.5 V11.5 H.5Z" fill="#fbfaf0" stroke="#a89a68" stroke-width=".9"/><path d="M2 4h3 M2 6h4 M2 8h3" stroke="#6a8ad0" stroke-width=".9"/><path d="M4.5 15 V7.5 H8.5 L9.6 8.8 H15 V15Z" fill="#fbd680" stroke="#b8781a" stroke-width="1" stroke-linejoin="round"/><path d="M5 10 H14.6" stroke="#fdeab8" stroke-width="1.2"/></svg>
<div class="a" style="left:1326px;top:99px;width:39px;height:98px;border-radius:1px 1px 6px 6px;background:#e2e2e2;border:1px solid #fcfcfc;box-shadow:1px 1px 0 #bcbcbc,0 -1px 0 #b0b0b0"></div>
<div class="a" style="left:1336px;top:105px;width:20px;height:2px;background:linear-gradient(#8e887a 0,#8e887a 1px,#fafafa 1px,#fafafa 2px);-webkit-mask:repeating-linear-gradient(90deg,#000 0,#000 2px,transparent 2px,transparent 6px);mask:repeating-linear-gradient(90deg,#000 0,#000 2px,transparent 2px,transparent 6px)"></div>
<div class="a" style="left:1345px;top:119px;width:6px;height:5px;border:1px solid #5a544c;border-top-width:2px;background:#fff"></div>
<div class="a" style="left:1342px;top:122px;width:6px;height:5px;border:1px solid #5a544c;border-top-width:2px;background:#fff"></div>
<svg style="left:1339px;top:144px" width="14" height="16" viewBox="0 0 14 16"><defs><linearGradient id="olg" x1="0" y1="0" x2="0" y2="1"><stop offset="0" stop-color="#fff"/><stop offset="1" stop-color="#8cc0f4"/></linearGradient></defs><rect x=".6" y=".8" width="5" height="4.8" fill="url(#olg)" stroke="#1a6ab8" stroke-width="1.2"/><rect x=".6" y="9.8" width="5" height="4.8" fill="url(#olg)" stroke="#1a6ab8" stroke-width="1.2"/><rect x="7.4" y="6.2" width="2.2" height="2.2" fill="#fff" stroke="#1a6ab8" stroke-width="1"/><path d="M7 3.3h6 M7 12.4h6 M11.2 7.3h1.8" stroke="#1a6ab8" stroke-width="1.1"/></svg>
<svg style="left:1341px;top:172px" width="12" height="15" viewBox="0 0 12 15"><defs><linearGradient id="tlg" x1="0" y1="0" x2="0" y2="1"><stop offset="0" stop-color="#fff"/><stop offset=".45" stop-color="#eeeefa"/><stop offset="1" stop-color="#a4a4e4"/></linearGradient></defs><path d="M.6 .6 H10.6 V13.4 L8.2 13.4 L7 14.6 H3.4 L2.4 13.4 L.6 13.4Z" fill="url(#tlg)"/><path d="M.6 13 V.6 H10.6 V13" fill="none" stroke="#4a4a4a" stroke-width="1.2"/><path d="M2.4 3.4h6.6 M2.4 5.5h6.6 M2.4 7.6h6.6 M2.4 9.6h6.6" stroke="#3a3a3a" stroke-width=".9"/></svg>
<div class="a" style="left:1326px;top:200px;width:39px;height:239px;border-radius:1px 1px 6px 6px;background:#e2e2e2;border:1px solid #fcfcfc;box-shadow:1px 1px 0 #bcbcbc,0 -1px 0 #b0b0b0"></div>
<div class="a" style="left:1336px;top:206px;width:20px;height:2px;background:linear-gradient(#8e887a 0,#8e887a 1px,#fafafa 1px,#fafafa 2px);-webkit-mask:repeating-linear-gradient(90deg,#000 0,#000 2px,transparent 2px,transparent 6px);mask:repeating-linear-gradient(90deg,#000 0,#000 2px,transparent 2px,transparent 6px)"></div>
<div class="a" style="left:1344px;top:221px;width:6px;height:5px;border:1px solid #5a544c;border-top-width:2px;background:#fff"></div>
<div class="a" style="left:1341px;top:224px;width:6px;height:5px;border:1px solid #5a544c;border-top-width:2px;background:#fff"></div>
<svg style="left:1338px;top:244px" width="15" height="15" viewBox="0 0 15 15"><rect x=".5" y=".5" width="14" height="14" fill="#eef0f8" stroke="#8a94b8" stroke-width=".9"/><path d="M9 .5 H14.5 V14.5 H11 C12.5 11 8 8 10.5 5 C11.4 3.4 10 2 9 .5Z" fill="#fff" stroke="#8a94b8" stroke-width=".7"/><circle cx="5" cy="4.6" r="2.8" fill="#e02a2a"/><path d="M2.2 13.5 L5 8.6 L7.8 13.5Z" fill="#f5a020" stroke="#c87a08" stroke-width=".6"/></svg>
<svg style="left:1338px;top:273px" width="15" height="15" viewBox="0 0 15 15"><rect x=".5" y=".5" width="14" height="13.4" fill="#fbfbfd" stroke="#3a4a7a" stroke-width="1"/><rect x="1" y="1" width="13" height="2.6" fill="#8aa4d8"/><path d="M1 6.6h13 M1 9.8h13 M5.4 3.6v10" stroke="#8a94b8" stroke-width=".9"/></svg>
<svg style="left:1338px;top:301px" width="15" height="15" viewBox="0 0 15 15"><path d="M2.5 .5v14 M7.5 .5v14 M12.5 .5v14" stroke="#3a4a5a" stroke-width="1"/><circle cx="2.5" cy="8.6" r="2.2" fill="#f0c020" stroke="#8a6a08" stroke-width=".7"/><circle cx="7.5" cy="4.6" r="2.2" fill="#3aa83a" stroke="#1a6a1a" stroke-width=".7"/><circle cx="12.5" cy="9.6" r="2.2" fill="#3a7ad8" stroke="#1a3a8a" stroke-width=".7"/></svg>
<svg style="left:1338px;top:328px" width="16" height="16" viewBox="0 0 16 16"><path d="M.5 1.5 L4 3 L8 .8 L11.5 2.6 L15 1 V13 L11.5 14.6 L8 12.6 L4 15 L.5 13.4Z" fill="#3f9a3a" stroke="#1a5a1a" stroke-width=".8"/><path d="M4 3 V15 M8 .8 V12.6 M11.5 2.6 V14.6" stroke="#d8e85a" stroke-width=".9"/><path d="M.5 7 H15" stroke="#3a7ad0" stroke-width="1.4"/><rect x="9.5" y="7.5" width="5.6" height="7" fill="#f6f2dc" stroke="#6a5a2a" stroke-width=".8"/><path d="M10.6 9.6h3.4 M10.6 11.4h3.4 M10.6 13.2h3.4" stroke="#6a5a2a" stroke-width=".7"/></svg>
<svg style="left:1339px;top:357px" width="14" height="15" viewBox="0 0 14 15"><rect x="3.5" y="4.5" width="10" height="9.6" fill="#f8fafc" stroke="#4a6a9a" stroke-width="1"/><path d="M5.5 8h6" stroke="#d03a3a" stroke-width="1"/><path d="M5.5 10.4h6 M5.5 12.4h4" stroke="#4a8ad0" stroke-width="1"/><path d="M.6 .6 L6.2 2 L4.6 3.4 L7.2 6 L6 7.2 L3.4 4.6 L2 6.2Z" fill="#1a2a4a"/></svg>
<svg style="left:1338px;top:385px" width="15" height="15" viewBox="0 0 15 15"><rect x=".8" y=".8" width="13.4" height="10.4" rx="1.4" fill="#3a7ad8" stroke="#1a3a8a" stroke-width="1"/><rect x="2.8" y="2.8" width="9.4" height="6.2" fill="#f4f8ff"/><path d="M4.4 5h6 M4.4 7h4" stroke="#3a4a6a" stroke-width=".8"/><path d="M6 11.4 V13 H3.6 V14.4 H11.4 V13 H9 V11.4" fill="#2a5ab8"/></svg>
<svg style="left:1338px;top:412px" width="16" height="16" viewBox="0 0 16 16"><g transform="rotate(-38 8 8)"><path d="M-1 5.5 L2.5 6.5 V10.5 L-1 11.5Z" fill="#fff8c0" stroke="#e8d060" stroke-width=".6"/><rect x="2.5" y="5.6" width="4.6" height="5.8" fill="#a4a4a4" stroke="#6a6a6a" stroke-width=".7"/><rect x="7.1" y="6.2" width="8.6" height="4.6" rx="1" fill="#fbdc94" stroke="#b8821c" stroke-width=".8"/><circle cx="12" cy="8" r=".9" fill="#8a5a10"/></g></svg>

<!-- status.html -->
<div class="sp" style="left:705px;top:738px;height:26px"></div>
<div class="sp" style="left:823px;top:738px;height:26px"></div>
<div class="sp" style="left:935px;top:738px;height:26px"></div>
<div class="hd" style="left:1046px;top:742px;height:22px;width:1px"></div>
<div class="st" style="left:712px;letter-spacing:.7px">Writable</div>
<div class="st" style="left:831px;letter-spacing:.28px">Smart Insert</div>
<div class="st" style="left:943px;letter-spacing:-.45px">714 : 52</div>

</body></html>
